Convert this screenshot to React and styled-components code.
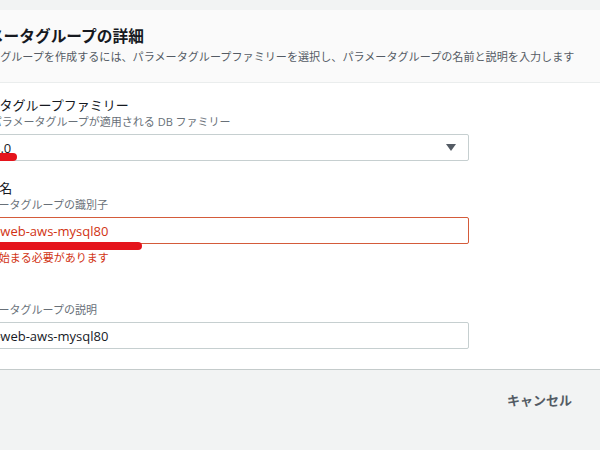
import React from 'react';
import styled, { createGlobalStyle } from 'styled-components';

const GlobalStyle = createGlobalStyle`
  body {
    margin: 0;
    background: #f2f3f3;
    font-family: "Open Sans", "Noto Sans CJK JP", sans-serif;
    color: #16191f;
  }
`;

const Page = styled.div`
  width: 600px;
  height: 450px;
  overflow: hidden;
  padding-top: 10px;
  box-sizing: border-box;
`;

// the view is scrolled: the card starts left of the window
const Layout = styled.div`
  width: 724px;
  margin-left: -64px;
`;

const Card = styled.section`
  background: #fff;
  border-bottom: 1px solid #c4cbcb;
`;

const Header = styled.header`
  background: #fafafa;
  border-bottom: 1px solid #eaeded;
  padding: 15px 12px 17px 21px;
`;

const Title = styled.h2`
  margin: 0;
  font-size: 15.7px;
  line-height: 22px;
  font-weight: 700;
  color: #16191f;
  white-space: nowrap;
`;

const Subtitle = styled.p`
  margin: 2px 0 0 -12px;
  font-size: 11.1px;
  line-height: 16px;
  color: #545b64;
  white-space: nowrap;
`;

const Body = styled.div`
  display: flex;
  flex-direction: column;
  gap: 18px;
  padding: 13px 12px 20px;
`;

const Field = styled.div`
  display: flex;
  flex-direction: column;
`;

const Label = styled.label`
  font-size: 13px;
  line-height: 18px;
  color: #16191f;
  white-space: nowrap;
`;

const Description = styled.span`
  font-size: 11px;
  line-height: 16px;
  color: #687078;
  white-space: nowrap;
`;

const Control = styled.div`
  position: relative;
  margin-top: 4px;
  width: 521px;
`;

const SelectBox = styled.div`
  display: flex;
  align-items: center;
  justify-content: space-between;
  height: 27px;
  box-sizing: border-box;
  padding: 0 12px 0 8px;
  border: 1px solid #c6cfd0;
  border-radius: 2px;
  background: #fff;
  font-size: 13px;
  color: #16191f;
`;

const Caret = styled.span`
  width: 0;
  height: 0;
  border-left: 5px solid transparent;
  border-right: 5px solid transparent;
  border-top: 7px solid #545b64;
`;

const TextInput = styled.input`
  display: block;
  width: 100%;
  height: 27px;
  box-sizing: border-box;
  padding: 0 10px;
  border: 1px solid ${p => (p.$invalid ? '#d45b3a' : '#c6cfd0')};
  border-radius: 2px;
  background: #fff;
  font-family: inherit;
  font-size: 13px;
  color: ${p => (p.$invalid ? '#d13212' : '#16191f')};
  outline: none;
`;

const ErrorText = styled.span`
  margin-top: 5px;
  font-size: 11px;
  line-height: 17px;
  color: #d13212;
  white-space: nowrap;
`;

// red marker strokes drawn over the screenshot
const Marker = styled.span`
  position: absolute;
  left: 0;
  top: ${p => p.$top}px;
  width: ${p => p.$width}px;
  height: 8px;
  border-radius: 0 4px 4px 0;
  background: #e5141c;
`;

const Actions = styled.div`
  display: flex;
  justify-content: flex-end;
  align-items: center;
  padding: 20px 88px 0 0;
`;

const LinkButton = styled.button`
  border: none;
  background: none;
  padding: 0;
  font-family: inherit;
  font-size: 13px;
  line-height: 20px;
  font-weight: 700;
  color: #545b64;
`;

export default function App() {
    return (
        <Page>
            <GlobalStyle />
            <Layout>
                <Card>
                    <Header>
                        <Title>パラメータグループの詳細</Title>
                        <Subtitle>パラメータグループを作成するには、パラメータグループファミリーを選択し、パラメータグループの名前と説明を入力します</Subtitle>
                    </Header>
                    <Body>
                        <Field>
                            <Label>パラメータグループファミリー</Label>
                            <Description>この DB パラメータグループが適用される DB ファミリー</Description>
                            <Control>
                                <SelectBox>
                                    <span>mysql8.0</span>
                                    <Caret />
                                </SelectBox>
                                <Marker $top={19} $width={69} />
                            </Control>
                        </Field>
                        <Field>
                            <Label>グループ名</Label>
                            <Description>DB パラメータグループの識別子</Description>
                            <Control>
                                <TextInput $invalid defaultValue="20211-web-aws-mysql80" />
                                <Marker $top={25} $width={194} />
                            </Control>
                            <ErrorText>英字a-z で始まる必要があります</ErrorText>
                        </Field>
                        <Field>
                            <Label>説明</Label>
                            <Description>DB パラメータグループの説明</Description>
                            <Control>
                                <TextInput defaultValue="20211-web-aws-mysql80" />
                            </Control>
                        </Field>
                    </Body>
                </Card>
                <Actions>
                    <LinkButton>キャンセル</LinkButton>
                </Actions>
            </Layout>
        </Page>
    );
}
